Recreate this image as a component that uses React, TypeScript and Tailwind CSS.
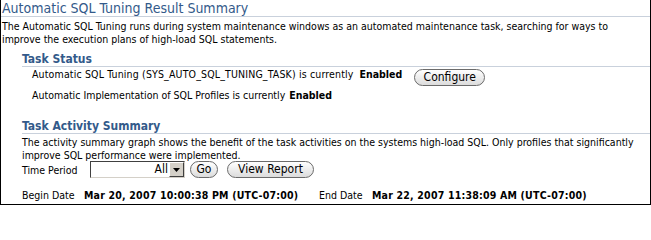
import React from "react";

function PillButton({ label, w }: { label: string; w: string }) {
  return (
    <button
      className={`${w} h-[17px] rounded-full border border-solid border-[#6b6b6b] bg-gradient-to-b from-white to-[#dcdcdc] text-[12px] leading-[15px] text-black flex items-center justify-center px-0 whitespace-nowrap`}
    >
      {label}
    </button>
  );
}

export default function App() {
  return (
    <div className="w-[651px] h-[205px] bg-[#000000] px-[1px] pb-[1px] flex flex-col">
      <div className="flex-1 bg-white font-['Tahoma','DejaVu_Sans_Condensed','DejaVu_Sans',sans-serif] text-[10.5px] text-black overflow-hidden whitespace-nowrap">
        <div className="h-[17px] border-b border-solid border-[#c9d1dc] pl-[1px] text-[14px] leading-[17px] text-[#335a8a]">
          Automatic SQL Tuning Result Summary
        </div>
        <div className="pl-[1px] leading-[13px] pt-[3px]">
          The Automatic SQL Tuning runs during system maintenance windows as an automated maintenance task, searching for ways to
          <br />
          improve the execution plans of high-load SQL statements.
        </div>
        <div className="ml-[21px] mt-[7px] h-[14px] border-b border-solid border-[#c9d1dc] text-[12px] font-bold leading-[13px] text-[#335a8a]">
          Task Status
        </div>
        <div className="ml-[31px] mt-[1px] flex items-start h-[20px]">
          <span className="leading-[13px] tracking-[0.15px]">Automatic SQL Tuning (SYS_AUTO_SQL_TUNING_TASK) is currently</span>
          <span className="ml-[6px] font-bold leading-[13px]">Enabled</span>
          <span className="ml-[12px] mt-[1px]">
            <PillButton label="Configure" w="w-[71px]" />
          </span>
        </div>
        <div className="ml-[31px] mt-[1px] flex items-start h-[13px]">
          <span className="leading-[13px]">Automatic Implementation of SQL Profiles is currently</span>
          <span className="ml-[4px] font-bold leading-[13px]">Enabled</span>
        </div>
        <div className="ml-[21px] mt-[18px] h-[14px] border-b border-solid border-[#c9d1dc] text-[12px] font-bold leading-[13px] text-[#335a8a]">
          Task Activity Summary
        </div>
        <div className="ml-[21px] leading-[13px] pt-[2px]">
          The activity summary graph shows the benefit of the task activities on the systems high-load SQL. Only profiles that significantly
          <br />
          improve SQL performance were implemented.
        </div>
        <div className="ml-[21px] -mt-[1px] flex items-center h-[17px]">
          <span className="w-[68px] pt-[2px]">Time Period</span>
          <div className="w-[95px] h-[17px] flex border-solid border-t border-l border-[#404040] border-b border-b-[#d4d0c8] border-r border-r-[#d4d0c8] bg-white">
            <div className="flex-1 text-right pr-[1px] text-[12px] leading-[15px]">All</div>
            <div className="w-[15px] h-[15px] bg-[#d4d0c8] border-solid border-t border-l border-white border-b border-b-[#404040] border-r border-r-[#404040] flex items-center justify-center">
              <svg width="7" height="4" viewBox="0 0 7 4">
                <path d="M0 0h7L3.5 4z" fill="#000" />
              </svg>
            </div>
          </div>
          <span className="ml-[5px]">
            <PillButton label="Go" w="w-[28px]" />
          </span>
          <span className="ml-[9px]">
            <PillButton label="View Report" w="w-[87px]" />
          </span>
        </div>
        <div className="ml-[21px] mt-[10px] flex leading-[14px]">
          <div className="w-[297px] flex">
            <span className="w-[62px]">Begin Date</span>
            <span className="font-bold tracking-[0.2px]">Mar 20, 2007 10:00:38 PM (UTC-07:00)</span>
          </div>
          <div className="flex">
            <span className="w-[53px]">End Date</span>
            <span className="font-bold tracking-[0.2px]">Mar 22, 2007 11:38:09 AM (UTC-07:00)</span>
          </div>
        </div>
      </div>
    </div>
  );
}
